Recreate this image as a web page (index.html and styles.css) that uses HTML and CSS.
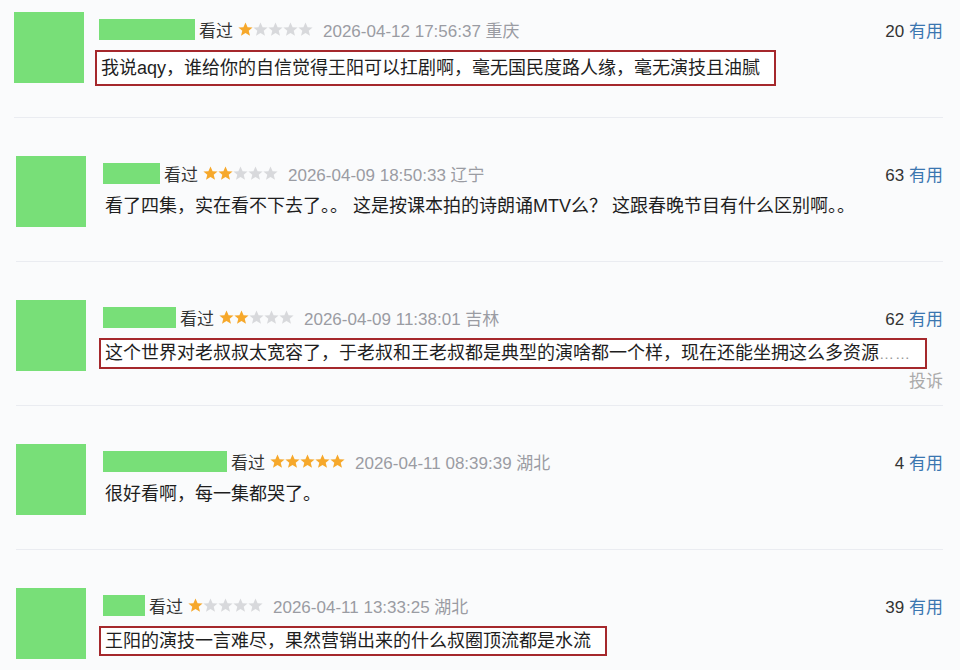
FILE: index.html
```html
<!DOCTYPE html>
<html lang="zh-CN">
<head>
<meta charset="utf-8">
<title>短评</title>
<link rel="stylesheet" href="styles.css">
</head>
<body>
<div class="list">

  <div class="item first">
    <div class="avatar"></div>
    <div class="body">
      <div class="meta">
        <span class="name w96"></span>
        <span class="status">看过</span>
        <svg class="stars" viewBox="0 0 75 15" width="75" height="15">
          <g class="on"><polygon points="7.5,0.5 9.6,5.3 14.6,5.6 10.7,8.8 12,13.8 7.5,11 3,13.8 4.3,8.8 0.4,5.6 5.4,5.3"/></g>
          <g class="off">
            <polygon transform="translate(15 0)" points="7.5,0.5 9.6,5.3 14.6,5.6 10.7,8.8 12,13.8 7.5,11 3,13.8 4.3,8.8 0.4,5.6 5.4,5.3"/>
            <polygon transform="translate(30 0)" points="7.5,0.5 9.6,5.3 14.6,5.6 10.7,8.8 12,13.8 7.5,11 3,13.8 4.3,8.8 0.4,5.6 5.4,5.3"/>
            <polygon transform="translate(45 0)" points="7.5,0.5 9.6,5.3 14.6,5.6 10.7,8.8 12,13.8 7.5,11 3,13.8 4.3,8.8 0.4,5.6 5.4,5.3"/>
            <polygon transform="translate(60 0)" points="7.5,0.5 9.6,5.3 14.6,5.6 10.7,8.8 12,13.8 7.5,11 3,13.8 4.3,8.8 0.4,5.6 5.4,5.3"/>
          </g>
        </svg>
        <span class="time">2026-04-12 17:56:37 重庆</span>
        <span class="votes">20 <a class="useful">有用</a></span>
      </div>
      <p class="quote boxed tall">我说aqy，谁给你的自信觉得王阳可以扛剧啊，毫无国民度路人缘，毫无演技且油腻</p>
    </div>
  </div>

  <div class="item">
    <div class="avatar"></div>
    <div class="body">
      <div class="meta">
        <span class="name w57"></span>
        <span class="status">看过</span>
        <svg class="stars" viewBox="0 0 75 15" width="75" height="15">
          <g class="on">
            <polygon points="7.5,0.5 9.6,5.3 14.6,5.6 10.7,8.8 12,13.8 7.5,11 3,13.8 4.3,8.8 0.4,5.6 5.4,5.3"/>
            <polygon transform="translate(15 0)" points="7.5,0.5 9.6,5.3 14.6,5.6 10.7,8.8 12,13.8 7.5,11 3,13.8 4.3,8.8 0.4,5.6 5.4,5.3"/>
          </g>
          <g class="off">
            <polygon transform="translate(30 0)" points="7.5,0.5 9.6,5.3 14.6,5.6 10.7,8.8 12,13.8 7.5,11 3,13.8 4.3,8.8 0.4,5.6 5.4,5.3"/>
            <polygon transform="translate(45 0)" points="7.5,0.5 9.6,5.3 14.6,5.6 10.7,8.8 12,13.8 7.5,11 3,13.8 4.3,8.8 0.4,5.6 5.4,5.3"/>
            <polygon transform="translate(60 0)" points="7.5,0.5 9.6,5.3 14.6,5.6 10.7,8.8 12,13.8 7.5,11 3,13.8 4.3,8.8 0.4,5.6 5.4,5.3"/>
          </g>
        </svg>
        <span class="time">2026-04-09 18:50:33 辽宁</span>
        <span class="votes">63 <a class="useful">有用</a></span>
      </div>
      <p class="quote plain">看了四集，实在看不下去了。。 这是按课本拍的诗朗诵MTV么？ 这跟春晚节目有什么区别啊。。</p>
    </div>
  </div>

  <div class="item">
    <div class="avatar"></div>
    <div class="body">
      <div class="meta">
        <span class="name w73"></span>
        <span class="status">看过</span>
        <svg class="stars" viewBox="0 0 75 15" width="75" height="15">
          <g class="on">
            <polygon points="7.5,0.5 9.6,5.3 14.6,5.6 10.7,8.8 12,13.8 7.5,11 3,13.8 4.3,8.8 0.4,5.6 5.4,5.3"/>
            <polygon transform="translate(15 0)" points="7.5,0.5 9.6,5.3 14.6,5.6 10.7,8.8 12,13.8 7.5,11 3,13.8 4.3,8.8 0.4,5.6 5.4,5.3"/>
          </g>
          <g class="off">
            <polygon transform="translate(30 0)" points="7.5,0.5 9.6,5.3 14.6,5.6 10.7,8.8 12,13.8 7.5,11 3,13.8 4.3,8.8 0.4,5.6 5.4,5.3"/>
            <polygon transform="translate(45 0)" points="7.5,0.5 9.6,5.3 14.6,5.6 10.7,8.8 12,13.8 7.5,11 3,13.8 4.3,8.8 0.4,5.6 5.4,5.3"/>
            <polygon transform="translate(60 0)" points="7.5,0.5 9.6,5.3 14.6,5.6 10.7,8.8 12,13.8 7.5,11 3,13.8 4.3,8.8 0.4,5.6 5.4,5.3"/>
          </g>
        </svg>
        <span class="time">2026-04-09 11:38:01 吉林</span>
        <span class="votes">62 <a class="useful">有用</a></span>
      </div>
      <p class="quote boxed">这个世界对老叔叔太宽容了，于老叔和王老叔都是典型的演啥都一个样，现在还能坐拥这么多资源<span class="ellipsis">……</span></p>
      <div class="report">投诉</div>
    </div>
  </div>

  <div class="item">
    <div class="avatar"></div>
    <div class="body">
      <div class="meta">
        <span class="name w124"></span>
        <span class="status">看过</span>
        <svg class="stars" viewBox="0 0 75 15" width="75" height="15">
          <g class="on">
            <polygon points="7.5,0.5 9.6,5.3 14.6,5.6 10.7,8.8 12,13.8 7.5,11 3,13.8 4.3,8.8 0.4,5.6 5.4,5.3"/>
            <polygon transform="translate(15 0)" points="7.5,0.5 9.6,5.3 14.6,5.6 10.7,8.8 12,13.8 7.5,11 3,13.8 4.3,8.8 0.4,5.6 5.4,5.3"/>
            <polygon transform="translate(30 0)" points="7.5,0.5 9.6,5.3 14.6,5.6 10.7,8.8 12,13.8 7.5,11 3,13.8 4.3,8.8 0.4,5.6 5.4,5.3"/>
            <polygon transform="translate(45 0)" points="7.5,0.5 9.6,5.3 14.6,5.6 10.7,8.8 12,13.8 7.5,11 3,13.8 4.3,8.8 0.4,5.6 5.4,5.3"/>
            <polygon transform="translate(60 0)" points="7.5,0.5 9.6,5.3 14.6,5.6 10.7,8.8 12,13.8 7.5,11 3,13.8 4.3,8.8 0.4,5.6 5.4,5.3"/>
          </g>
        </svg>
        <span class="time">2026-04-11 08:39:39 湖北</span>
        <span class="votes">4 <a class="useful">有用</a></span>
      </div>
      <p class="quote plain">很好看啊，每一集都哭了。</p>
    </div>
  </div>

  <div class="item">
    <div class="avatar"></div>
    <div class="body">
      <div class="meta">
        <span class="name w42"></span>
        <span class="status">看过</span>
        <svg class="stars" viewBox="0 0 75 15" width="75" height="15">
          <g class="on"><polygon points="7.5,0.5 9.6,5.3 14.6,5.6 10.7,8.8 12,13.8 7.5,11 3,13.8 4.3,8.8 0.4,5.6 5.4,5.3"/></g>
          <g class="off">
            <polygon transform="translate(15 0)" points="7.5,0.5 9.6,5.3 14.6,5.6 10.7,8.8 12,13.8 7.5,11 3,13.8 4.3,8.8 0.4,5.6 5.4,5.3"/>
            <polygon transform="translate(30 0)" points="7.5,0.5 9.6,5.3 14.6,5.6 10.7,8.8 12,13.8 7.5,11 3,13.8 4.3,8.8 0.4,5.6 5.4,5.3"/>
            <polygon transform="translate(45 0)" points="7.5,0.5 9.6,5.3 14.6,5.6 10.7,8.8 12,13.8 7.5,11 3,13.8 4.3,8.8 0.4,5.6 5.4,5.3"/>
            <polygon transform="translate(60 0)" points="7.5,0.5 9.6,5.3 14.6,5.6 10.7,8.8 12,13.8 7.5,11 3,13.8 4.3,8.8 0.4,5.6 5.4,5.3"/>
          </g>
        </svg>
        <span class="time">2026-04-11 13:33:25 湖北</span>
        <span class="votes">39 <a class="useful">有用</a></span>
      </div>
      <p class="quote boxed">王阳的演技一言难尽，果然营销出来的什么叔圈顶流都是水流</p>
    </div>
  </div>

</div>
</body>
</html>
```

FILE: styles.css
```css
html, body {
  margin: 0;
  padding: 0;
  background: #fafbfc;
}

body {
  font-family: "Liberation Sans", "Noto Sans CJK SC", sans-serif;
  color: #333;
  width: 960px;
  height: 670px;
  overflow: hidden;
}

.list {
  padding: 12px 17px 0 16px;
}

.item {
  display: flex;
  gap: 17px;
  height: 106px;
  box-sizing: border-box;
  border-bottom: 1px solid #eaecf1;
  margin-bottom: 38px;
}

.item.first {
  margin-left: -2px;
  gap: 15px;
}

.avatar {
  flex: 0 0 70px;
  height: 71px;
  background: #78df78;
}

.body {
  flex: 1;
  min-width: 0;
}

.meta {
  display: flex;
  align-items: center;
  height: 34px;
  font-size: 17px;
}

.name {
  display: block;
  height: 21px;
  background: #78df78;
  margin-right: 4px;
}

.w96 { width: 96px; }
.w57 { width: 57px; }
.w73 { width: 73px; }
.w124 { width: 124px; }
.w42 { width: 42px; }

.status {
  color: #333;
  margin-right: 5px;
}

.stars {
  display: block;
  margin-right: 10px;
}

.stars .on { fill: #f6a82b; }
.stars .off { fill: #d8d9dc; }

.time {
  color: #9a9ca3;
}

.votes {
  margin-left: auto;
  color: #333;
}

.useful {
  color: #3a76b0;
}

.quote {
  display: inline-block;
  margin: 4px 0 0 -4px;
  padding: 2px 14px 2px 4px;
  border: 2px solid transparent;
  font-size: 18px;
  line-height: 22px;
  color: #1e1e1e;
  white-space: nowrap;
}

.quote.plain {
  margin-top: 1px;
}

.quote.boxed {
  border-color: #a5282c;
  background: #fff;
}

.quote.tall {
  padding-top: 5px;
  padding-bottom: 5px;
}

.ellipsis {
  color: #999;
  font-size: 15px;
  letter-spacing: 1px;
}

.report {
  text-align: right;
  font-size: 17px;
  line-height: 26px;
  color: #aaa;
}
```
